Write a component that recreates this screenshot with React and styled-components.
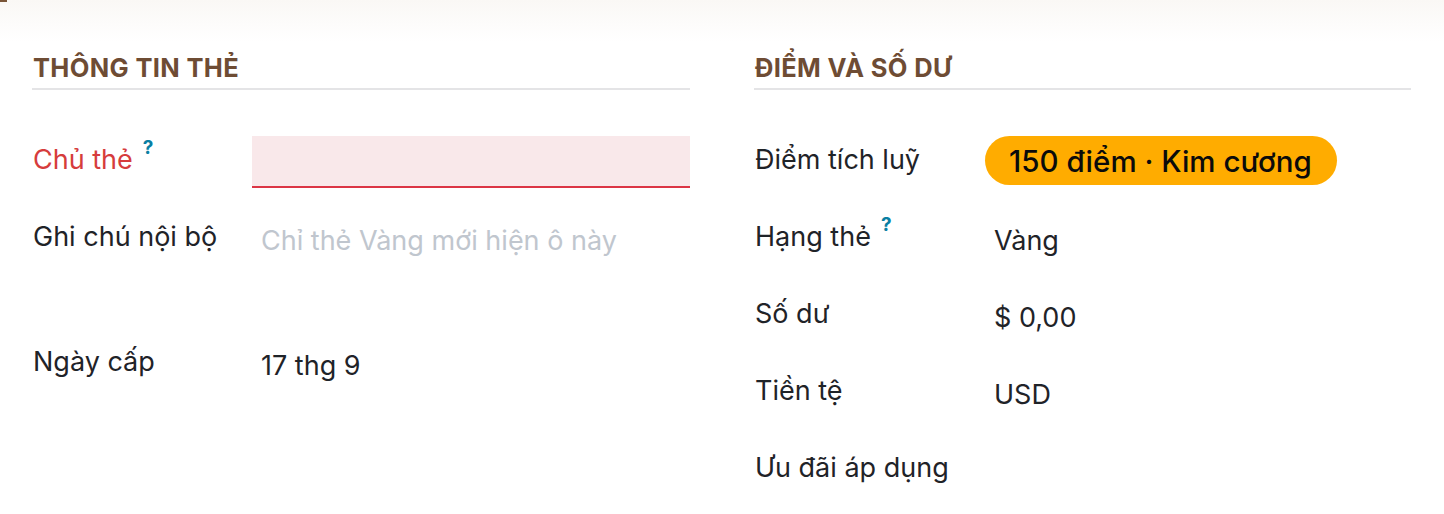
import React from "react";
import styled, { createGlobalStyle } from "styled-components";

const Global = createGlobalStyle`
  html, body { margin: 0; padding: 0; background: #fff; }
  body {
    font-family: Inter, "Noto Sans", sans-serif;
    color: #1f2328;
    -webkit-font-smoothing: antialiased;
  }
`;

const Page = styled.div`
  width: 1444px;
  height: 514px;
  overflow: hidden;
  background: linear-gradient(180deg, #faf8f5 0px, #fdfcfb 24px, #ffffff 42px);
`;

const TopMark = styled.div`
  width: 7px;
  height: 2px;
  background: #7a5538;
`;

const Columns = styled.div`
  display: grid;
  grid-template-columns: 658px 657px;
  column-gap: 64px;
  padding: 50px 33px 0 32px;
`;

const Section = styled.section`
  display: flex;
  flex-direction: column;
`;

const SectionTitle = styled.h2`
  margin: 0 0 46px;
  padding: 0 0 4px 1px;
  font-size: 25.5px;
  line-height: 32px;
  font-weight: 700;
  letter-spacing: 0.35px;
  text-transform: uppercase;
  color: #6e4c34;
  border-bottom: 2px solid #e4e4e6;
`;

const Row = styled.div`
  display: grid;
  grid-template-columns: ${(p) => p.$labelWidth}px 1fr;
  min-height: 52px;
  margin-bottom: 25px;
  align-items: start;
`;

const Label = styled.div`
  padding: 7px 0 0 1px;
  font-size: 27px;
  line-height: 34px;
  font-weight: 400;
  color: ${(p) => (p.$invalid ? "#d63c3c" : "#1f2328")};
  white-space: nowrap;
`;

const Help = styled.sup`
  margin-left: 10px;
  font-size: 19px;
  font-weight: 700;
  color: #0a7fa3;
  vertical-align: 15px;
  line-height: 0;
`;

const Value = styled.div`
  padding: 11px 0 0 9px;
  font-size: 27px;
  line-height: 34px;
  color: #1f2328;
`;

const RequiredInput = styled.div`
  height: 50px;
  background: #f9e8ea;
  border-bottom: 2px solid #dc3545;
`;

const NoteArea = styled.div`
  min-height: 100px;
  padding: 11px 0 0 9px;
  box-sizing: border-box;
  font-size: 27px;
  line-height: 34px;
  color: #c0c6ce;
`;

const Badge = styled.span`
  justify-self: start;
  display: inline-flex;
  align-items: center;
  height: 49px;
  padding: 0 25px 0 24px;
  border-radius: 25px;
  background: #ffac00;
  color: #0b0b0b;
  font-size: 29.5px;
  font-weight: 500;
  white-space: nowrap;
`;

const leftRows = [
  { label: "Chủ thẻ", invalid: true, help: true, kind: "input" },
  { label: "Ghi chú nội bộ", kind: "note", text: "Chỉ thẻ Vàng mới hiện ô này" },
  { label: "Ngày cấp", kind: "text", text: "17 thg 9" },
];

const rightRows = [
  { label: "Điểm tích luỹ", kind: "badge", text: "150 điểm · Kim cương" },
  { label: "Hạng thẻ", help: true, kind: "text", text: "Vàng" },
  { label: "Số dư", kind: "text", text: "$ 0,00" },
  { label: "Tiền tệ", kind: "text", text: "USD" },
  { label: "Ưu đãi áp dụng", kind: "text", text: "" },
];

function Field({ row, labelWidth }) {
  let value;
  if (row.kind === "input") value = <RequiredInput />;
  else if (row.kind === "note") value = <NoteArea>{row.text}</NoteArea>;
  else if (row.kind === "badge") value = <Badge>{row.text}</Badge>;
  else value = <Value>{row.text}</Value>;
  return (
    <Row $labelWidth={labelWidth}>
      <Label $invalid={row.invalid}>
        {row.label}
        {row.help && <Help>?</Help>}
      </Label>
      {value}
    </Row>
  );
}

export default function App() {
  return (
    <>
      <Global />
      <Page>
        <TopMark />
        <Columns>
          <Section>
            <SectionTitle>Thông tin thẻ</SectionTitle>
            {leftRows.map((r) => (
              <Field key={r.label} row={r} labelWidth={220} />
            ))}
          </Section>
          <Section>
            <SectionTitle>Điểm và số dư</SectionTitle>
            {rightRows.map((r) => (
              <Field key={r.label} row={r} labelWidth={231} />
            ))}
          </Section>
        </Columns>
      </Page>
    </>
  );
}
